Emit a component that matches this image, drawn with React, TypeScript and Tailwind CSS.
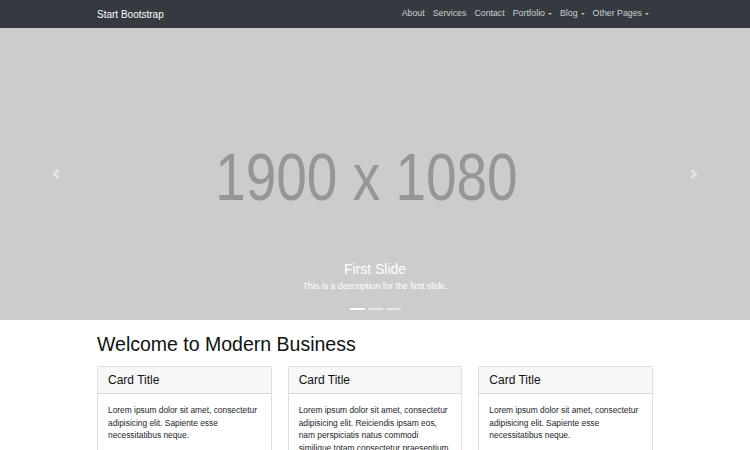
import React from 'react';

const navLinks = [
  { label: 'About', caret: false },
  { label: 'Services', caret: false },
  { label: 'Contact', caret: false },
  { label: 'Portfolio', caret: true },
  { label: 'Blog', caret: true },
  { label: 'Other Pages', caret: true },
];

const cards = [
  'Lorem ipsum dolor sit amet, consectetur adipisicing elit. Sapiente esse necessitatibus neque.',
  'Lorem ipsum dolor sit amet, consectetur adipisicing elit. Reiciendis ipsam eos, nam perspiciatis natus commodi similique totam consectetur praesentium molestiae atque exercitationem ut consequuntur, sed eveniet, magni nostrum sint fuga.',
  'Lorem ipsum dolor sit amet, consectetur adipisicing elit. Sapiente esse necessitatibus neque.',
];

const Chevron: React.FC<{ dir: 'left' | 'right' }> = ({ dir }) => (
  <svg width="10" height="10" viewBox="0 0 8 8" fill="#fff">
    {dir === 'left' ? (
      <path d="M5.25 0l-4 4 4 4 1.5-1.5L4.25 4l2.5-2.5L5.25 0z" />
    ) : (
      <path d="M2.75 0l-1.5 1.5L3.75 4l-2.5 2.5L2.75 8l4-4-4-4z" />
    )}
  </svg>
);

const App: React.FC = () => {
  return (
    <div className="min-h-[450px] bg-white text-[#212529]" style={{ fontFamily: '"Liberation Sans", Arial, sans-serif' }}>
      {/* Navbar */}
      <nav className="h-[28px] bg-[#343a40]">
        <div className="w-[556px] mx-auto h-full flex items-center justify-between">
          <span className="text-[10px] text-white">Start Bootstrap</span>
          <ul className="flex items-center">
            {navLinks.map((l) => (
              <li key={l.label} className="px-[4px] text-[8.8px] text-white/75 flex items-center">
                {l.label}
                {l.caret && (
                  <span className="ml-[3px] w-0 h-0 border-t-[2.5px] border-t-white/70 border-x-[2.5px] border-x-transparent" />
                )}
              </li>
            ))}
          </ul>
        </div>
      </nav>

      {/* Carousel */}
      <div className="relative h-[292px] bg-[#cccccc] overflow-hidden flex items-center justify-center">
        <span className="text-[67px] leading-none text-[#969696] scale-x-[0.82] whitespace-nowrap -translate-x-[9px] translate-y-[2px]">1900 x 1080</span>

        <div className="absolute left-0 top-0 bottom-0 w-[15%] flex items-center justify-center opacity-50">
          <Chevron dir="left" />
        </div>
        <div className="absolute right-0 top-0 bottom-0 w-[15%] flex items-center justify-center opacity-50">
          <Chevron dir="right" />
        </div>

        <div className="absolute left-[15%] right-[15%] bottom-[28px] text-center text-white">
          <h3 className="text-[14px] leading-[17px] mb-[2px]">First Slide</h3>
          <p className="text-[8.8px] leading-[12px]">This is a description for the first slide.</p>
        </div>

        <ol className="absolute left-0 right-0 bottom-[10px] flex justify-center gap-[3px]">
          <li className="w-[15px] h-[2px] bg-white" />
          <li className="w-[15px] h-[2px] bg-white/50" />
          <li className="w-[15px] h-[2px] bg-white/50" />
        </ol>
      </div>

      {/* Content */}
      <div className="w-[556px] mx-auto">
        <h1 className="text-[19.5px] leading-[24px] mt-[12px] mb-[10px] text-[#111]">Welcome to Modern Business</h1>
        <div className="grid grid-cols-3 gap-4">
          {cards.map((text, i) => (
            <div key={i} className="border border-black/[0.125] rounded-[2px] flex flex-col">
              <div className="bg-[#f7f7f7] border-b border-black/[0.125] px-[10px] py-[6px]">
                <h4 className="text-[12px] leading-[14px] text-[#111]">Card Title</h4>
              </div>
              <div className="p-[10px]">
                <p className="text-[8.4px] leading-[12.5px]">{text}</p>
              </div>
            </div>
          ))}
        </div>
      </div>
    </div>
  );
};

export default App;
